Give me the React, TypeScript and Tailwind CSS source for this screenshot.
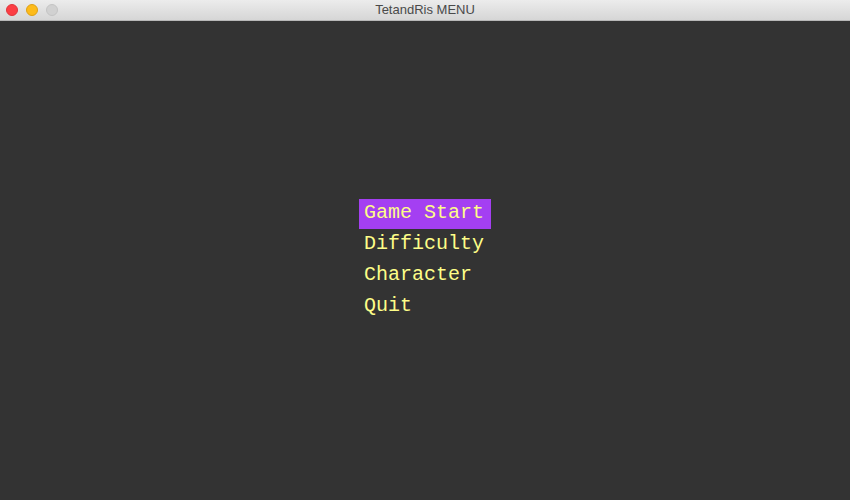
const items = ["Game Start", "Difficulty", "Character", "Quit"];

export default function App() {
  const selected = 0;

  return (
    <div className="flex h-[500px] w-[850px] flex-col bg-[#333333]">
      {/* Window title bar */}
      <div className="relative flex h-[21px] items-center justify-center border-b border-[#b8b8b8] bg-gradient-to-b from-[#ececec] to-[#d6d6d6]">
        <div className="absolute left-[6px] top-[4px] flex gap-[8px]">
          <span className="h-[12px] w-[12px] rounded-full border border-[#e0353b] bg-[#fc3e44]" />
          <span className="h-[12px] w-[12px] rounded-full border border-[#dea113] bg-[#fdbb1a]" />
          <span className="h-[12px] w-[12px] rounded-full border border-[#c4c4c4] bg-[#d1d1d1]" />
        </div>
        <span className="font-['Liberation_Sans',sans-serif] text-[13px] text-[#4a4a4a]">
          TetandRis MENU
        </span>
      </div>

      {/* Menu */}
      <div className="flex flex-1 items-center justify-center">
        <ul className="flex flex-col gap-[1px] font-['Liberation_Mono',monospace] text-[20px] text-[#fdfd88]">
          {items.map((item, i) => (
            <li
              key={item}
              className={
                i === selected
                  ? "flex h-[30px] w-[132px] items-center bg-[#a43ff2] px-[5px] pb-[2px]"
                  : "flex h-[30px] w-[132px] items-center px-[5px] pb-[2px]"
              }
            >
              {item}
            </li>
          ))}
        </ul>
      </div>
    </div>
  );
}
